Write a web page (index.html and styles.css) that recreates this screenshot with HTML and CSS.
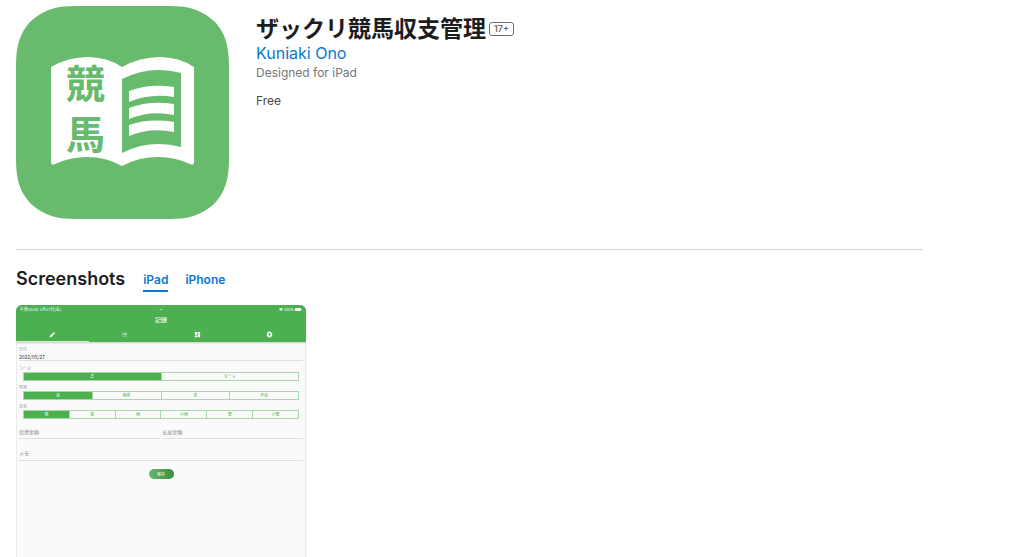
FILE: index.html
```
<!DOCTYPE html>
<html lang="en">
<head>
<meta charset="utf-8">
<title>ザックリ競馬収支管理</title>
<link rel="stylesheet" href="styles.css">
</head>
<body>
<main class="page">
  <header class="product">
    <svg class="app-icon" viewBox="0 0 213 213" role="img" aria-label="App icon">
      <path fill="#68bb6c" d="M60 0H153C171 0 182 3 193 11Q199 15 203 21C210 31 213 42 213 60V153C213 171 210 182 203 192Q199 198 193 202C182 210 171 213 153 213H60C42 213 31 210 20 202Q14 198 10 192C3 182 0 171 0 153V60C0 42 3 31 10 21Q14 15 20 11C31 3 42 0 60 0Z"/>
      <path fill="#fff" d="M35 61Q52 51 72 51Q91 51 106 61Q124 51 144 51Q163 51 178 61V156Q178 160 174 158Q159 151 143 151Q122 151 106 160Q90 151 71 151Q54 151 39 158Q35 160 35 156Z"/>
      <path fill="#68bb6c" d="M106 73Q124 64 143 64Q154 64 165 67V141Q154 138 143 138Q123 138 106 147Z"/>
      <path fill="#fff" d="M113 85Q134 77 158 81V91Q134 87 113 96ZM113 102Q134 94 158 98V109Q134 104 113 113ZM113 119Q134 112 158 116V126Q134 121 113 130Z"/>
      <text class="icon-text" x="50" y="92">競</text>
      <text class="icon-text" x="50" y="143">馬</text>
    </svg>
    <div class="info">
      <h1 class="title">ザックリ競馬収支管理 <span class="age">17+</span></h1>
      <a class="developer" href="#">Kuniaki Ono</a>
      <p class="device-note">Designed for iPad</p>
      <p class="price">Free</p>
    </div>
  </header>
  <section class="screenshots">
    <div class="section-head">
      <h2 class="heading">Screenshots</h2>
      <nav class="tabs">
        <a class="tab tab-active" href="#">iPad</a>
        <a class="tab" href="#">iPhone</a>
      </nav>
    </div>
    <div class="shot">
      <div class="shot-header">
        <div class="status">
          <span>午後10:54&nbsp; 5月27日(金)</span>
          <span class="dots">•••</span>
          <span class="battery">
            <svg class="wifi" viewBox="0 0 8 6"><path fill="#fff" d="M0 2Q4-2 8 2L4 6Z"/></svg>
            100%
            <svg class="cell" viewBox="0 0 14 6"><rect width="12" height="6" rx="2" fill="#fff"/><rect x="13" y="2" width="1" height="2" fill="#fff"/></svg>
          </span>
        </div>
        <div class="shot-title">記録</div>
        <div class="shot-nav">
          <button class="nav-item nav-active" aria-label="Edit"><svg class="nav-icon" viewBox="0 0 24 24"><path fill="#fff" d="M3 17V21h4L18 10l-4-4L3 17ZM21 7a1 1 0 0 0 0-1l-3-3a1 1 0 0 0-1 0l-2 2 4 4L21 7Z"/></svg></button>
          <button class="nav-item" aria-label="List"><svg class="nav-icon nav-faint" viewBox="0 0 24 24"><path fill="#fff" d="M3 6h3v3H3zM8 6h13v3H8zM3 11h3v3H3zM8 11h13v3H8zM3 16h3v3H3zM8 16h13v3H8z"/></svg></button>
          <button class="nav-item" aria-label="Dashboard"><svg class="nav-icon" viewBox="0 0 24 24"><path fill="#fff" d="M3 3h8v10H3zM13 3h8v6h-8zM3 15h8v6H3zM13 11h8v10h-8z"/></svg></button>
          <button class="nav-item" aria-label="Settings"><svg class="nav-icon" viewBox="0 0 24 24"><path fill="#fff" fill-rule="evenodd" d="M9 2h6l1 3 3-1 3 5-2 3 2 3-3 5-3-1-1 3H9l-1-3-3 1-3-5 2-3-2-3 3-5 3 1ZM12 8a4 4 0 1 0 0 8 4 4 0 0 0 0-8Z"/></svg></button>
        </div>
      </div>
      <form class="shot-form">
        <label class="tiny" for="date">日付</label>
        <input class="field date" id="date" value="2022/05/27">
        <div class="tiny">コース</div>
        <div class="segments">
          <button type="button" class="seg seg-on">芝</button><button type="button" class="seg">ダート</button>
        </div>
        <div class="tiny">馬場</div>
        <div class="segments">
          <button type="button" class="seg seg-on">良</button><button type="button" class="seg">稍重</button><button type="button" class="seg">重</button><button type="button" class="seg">不良</button>
        </div>
        <div class="tiny">天気</div>
        <div class="segments">
          <button type="button" class="seg seg-on">晴</button><button type="button" class="seg">曇</button><button type="button" class="seg">雨</button><button type="button" class="seg">小雨</button><button type="button" class="seg">雪</button><button type="button" class="seg">小雪</button>
        </div>
        <div class="amounts">
          <input class="field amount" aria-label="投資金額" placeholder="投資金額">
          <input class="field amount" aria-label="払戻金額" placeholder="払戻金額">
        </div>
        <input class="field memo" aria-label="メモ" placeholder="メモ">
        <button type="button" class="save">保存</button>
      </form>
    </div>
  </section>
</main>
</body>
</html>
```
FILE: styles.css
```
* { box-sizing: border-box; }
body {
  margin: 0;
  background: #fff;
  color: #1d1d1f;
  font-family: Inter, "Noto Sans CJK JP", sans-serif;
}
h1, h2, p { margin: 0; }
a { color: #0a78d1; text-decoration: none; }
button, input { font: inherit; border: 0; padding: 0; margin: 0; background: none; }
.page {
  height: 100vh;
  overflow: hidden;
  padding: 6px 101px 0 16px;
}
.product {
  display: flex;
  gap: 27px;
  padding-bottom: 30px;
  border-bottom: 1px solid #d6d6d6;
}
.app-icon { width: 213px; flex: none; display: block; }
.icon-text { font: bold 39px "Liberation Sans", "Noto Sans CJK JP", sans-serif; fill: #68bb6c; }
.info { padding-top: 6px; }
.title {
  display: flex;
  align-items: center;
  gap: 3px;
  font: bold 23px/30px "Noto Sans CJK JP", sans-serif;
}
.age {
  margin-top: 4px;
  padding: 0 4px;
  border: 1px solid #6e6e73;
  border-radius: 3px;
  color: #6e6e73;
  font: 600 9px/12px Inter, sans-serif;
}
.developer { display: block; font-size: 16px; line-height: 22px; }
.device-note { color: #777; font-size: 12px; line-height: 18px; }
.price { margin-top: 10px; color: #494949; font-size: 12px; line-height: 18px; }
.section-head { display: flex; align-items: flex-end; gap: 18px; padding: 16px 0 13px; }
.heading { font-size: 18px; line-height: 26px; font-weight: 600; }
.tabs { display: flex; gap: 17px; }
.tab { font-size: 12px; line-height: 20px; font-weight: 600; border-bottom: 2px solid transparent; }
.tab-active { border-color: #0a78d1; }
.shot {
  width: 290px;
  aspect-ratio: 3 / 4;
  background: linear-gradient(#4caf50 20px, #fafafa 20px);
  box-shadow: inset 0 0 0 1px #ebebeb;
  border-radius: 6px;
  overflow: hidden;
  font-family: "Noto Sans CJK JP", sans-serif;
}
.shot-header { background: #4caf50; color: #fff; box-shadow: 0 1px 2px #0003; }
.status {
  display: grid;
  grid-template-columns: 1fr auto 1fr;
  padding: 0 4px;
  font-size: 4px;
  line-height: 8px;
}
.dots { font-size: 3px; }
.battery { display: flex; align-items: center; justify-content: flex-end; gap: 1px; }
.wifi { width: 4px; }
.cell { width: 7px; }
.shot-title { font-size: 6px; line-height: 14px; text-align: center; }
.shot-nav { display: flex; }
.nav-item { flex: 1; height: 15px; display: flex; align-items: center; justify-content: center; border-bottom: 1px solid transparent; }
.nav-active { border-color: #d7edd8; }
.nav-icon { width: 7px; height: 7px; }
.nav-faint { opacity: 0.6; }
.shot-form { padding: 4px 3px; display: flex; flex-direction: column; }
.tiny { color: #999; font-size: 4px; line-height: 6px; }
.field { width: 100%; border-bottom: 1px solid #dedede; font-size: 5px; line-height: 8px; border-radius: 0; }
.date { height: 9px; margin-bottom: 4px; color: #333; }
.segments { display: flex; height: 9px; margin: 1px 4px 3px; border: 1px solid #a9d8ab; }
.seg { flex: 1; color: #4caf50; font-size: 4px; line-height: 7px; }
.seg + .seg { border-left: 1px solid #a9d8ab; }
.seg-on { background: #4caf50; color: #fff; }
.amounts { display: flex; gap: 3px; margin-top: 4px; }
.amount { height: 13px; padding-bottom: 1px; }
.field::placeholder { color: #888; opacity: 1; }
.memo { height: 13px; margin-top: 9px; padding-bottom: 3px; }
.save {
  align-self: center;
  width: 25px;
  margin-top: 8px;
  border-radius: 5px;
  background: linear-gradient(90deg, #66bb6a, #388e3c);
  color: #fff;
  font-size: 4px;
  line-height: 10px;
}
```
